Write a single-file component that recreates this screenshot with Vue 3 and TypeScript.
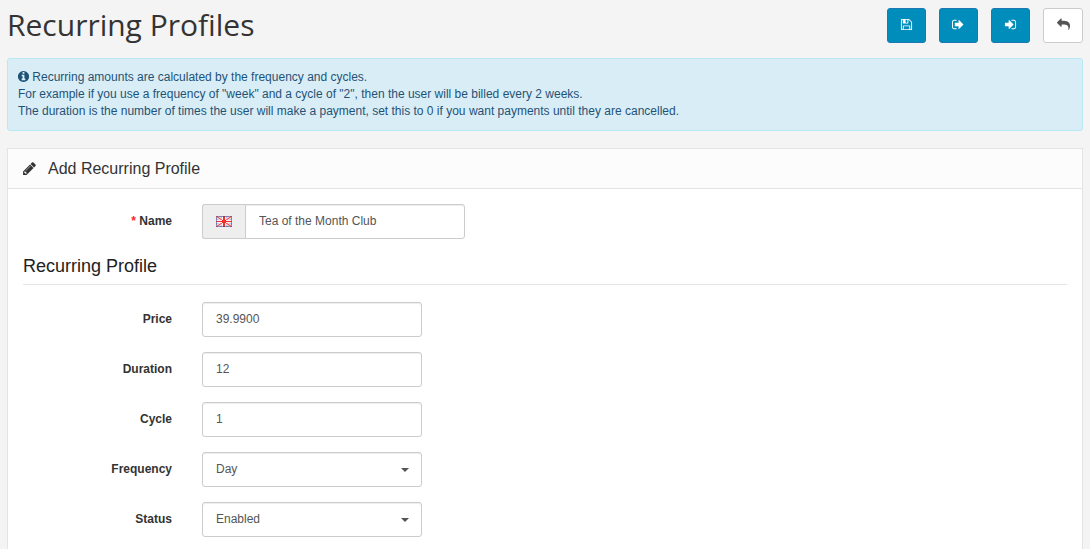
<script setup lang="ts">
import { ref } from 'vue'

interface Action {
  label: string
  path: string
  plain?: boolean
}

interface Field {
  id: string
  label: string
  value: string
  options?: string[]
}

const actions: Action[] = [
  {
    label: 'Save',
    path: 'M512 1536h768v-384h-768v384zm896 0h128v-896q0-14-10-38.5t-20-34.5l-281-281q-10-10-34-20t-39-10v416q0 40-28 68t-68 28h-576q-40 0-68-28t-28-68v-416h-128v1280h128v-416q0-40 28-68t68-28h832q40 0 68 28t28 68v416zm-384-928v-320q0-13-9.5-22.5t-22.5-9.5h-192q-13 0-22.5 9.5t-9.5 22.5v320q0 13 9.5 22.5t22.5 9.5h192q13 0 22.5-9.5t9.5-22.5zm640 32v928q0 40-28 68t-68 28h-1344q-40 0-68-28t-28-68v-1344q0-40 28-68t68-28h928q40 0 88 20t76 48l280 280q28 28 48 76t20 88z',
  },
  {
    label: 'Save and exit',
    path: 'M640 1440q0 4 1 20t.5 26.5-3 23.5-10 19.5-20.5 6.5h-320q-119 0-203.5-84.5t-84.5-203.5v-704q0-119 84.5-203.5t203.5-84.5h320q13 0 22.5 9.5t9.5 22.5q0 4 1 20t.5 26.5-3 23.5-10 19.5-20.5 6.5h-320q-66 0-113 47t-47 113v704q0 66 47 113t113 47h312l11.5 1 11.5 3 8 5.5 7 9 2 13.5zm928-544q0 26-19 45l-544 544q-19 19-45 19t-45-19-19-45v-288h-448q-26 0-45-19t-19-45v-384q0-26 19-45t45-19h448v-288q0-26 19-45t45-19 45 19l544 544q19 19 19 45z',
  },
  {
    label: 'Save and continue',
    path: 'M1312 896q0 26-19 45l-544 544q-19 19-45 19t-45-19-19-45v-288h-448q-26 0-45-19t-19-45v-384q0-26 19-45t45-19h448v-288q0-26 19-45t45-19 45 19l544 544q19 19 19 45zm352-352v704q0 119-84.5 203.5t-203.5 84.5h-320q-13 0-22.5-9.5t-9.5-22.5q0-4-1-20t-.5-26.5 3-23.5 10-19.5 20.5-6.5h320q66 0 113-47t47-113v-704q0-66-47-113t-113-47h-312l-11.5-1-11.5-3-8-5.5-7-9-2-13.5q0-4-1-20t-.5-26.5 3-23.5 10-19.5 20.5-6.5h320q119 0 203.5 84.5t84.5 203.5z',
  },
  {
    label: 'Cancel',
    plain: true,
    path: 'M0 640q0 26 19 45l512 512q19 19 45 19t45-19 19-45v-256h224q98 0 175.5 6t154 21.5 133 42.5 105.5 69.5 80 101 48.5 138.5 17.5 181q0 55-5 123 0 6-2.5 23.5t-2.5 26.5q0 15 8.5 25t23.5 10q16 0 28-17 7-9 13-22t13.5-30 10.5-24q127-285 127-451 0-199-53-333-162-403-875-403h-224v-256q0-26-19-45t-45-19-45 19l-512 512q-19 19-19 45z',
  },
]

const name = ref('Tea of the Month Club')

const fields = ref<Field[]>([
  { id: 'price', label: 'Price', value: '39.9900' },
  { id: 'duration', label: 'Duration', value: '12' },
  { id: 'cycle', label: 'Cycle', value: '1' },
  { id: 'frequency', label: 'Frequency', value: 'Day', options: ['Day', 'Week', 'Semi Month', 'Month', 'Year'] },
  { id: 'status', label: 'Status', value: 'Enabled', options: ['Enabled', 'Disabled'] },
])
</script>

<template>
  <main class="page">
    <header class="page-header">
      <h1>Recurring Profiles</h1>
      <div class="actions">
        <button
          v-for="a in actions"
          :key="a.label"
          type="button"
          class="btn"
          :class="{ plain: a.plain }"
          :aria-label="a.label"
        >
          <svg class="icon" viewBox="0 0 1792 1792" aria-hidden="true"><path :d="a.path" /></svg>
        </button>
      </div>
    </header>

    <div class="notice">
      <svg class="icon" viewBox="0 0 1792 1792" aria-hidden="true">
        <path d="M1152 1376v-160q0-14-9-23t-23-9h-96v-512q0-14-9-23t-23-9h-320q-14 0-23 9t-9 23v160q0 14 9 23t23 9h96v320h-96q-14 0-23 9t-9 23v160q0 14 9 23t23 9h448q14 0 23-9t9-23zm-128-896v-160q0-14-9-23t-23-9h-192q-14 0-23 9t-9 23v160q0 14 9 23t23 9h192q14 0 23-9t9-23zm640 416q0 209-103 385.5t-279.5 279.5-385.5 103-385.5-103-279.5-279.5-103-385.5 103-385.5 279.5-279.5 385.5-103 385.5 103 279.5 279.5 103 385.5z" />
      </svg>
      Recurring amounts are calculated by the frequency and cycles.<br />
      For example if you use a frequency of "week" and a cycle of "2", then the user will be billed every 2 weeks.<br />
      The duration is the number of times the user will make a payment, set this to 0 if you want payments until they are cancelled.
    </div>

    <section class="panel">
      <div class="panel-heading">
        <svg class="pencil" viewBox="0 0 1792 1792" aria-hidden="true">
          <path d="M491 1536l91-91-235-235-91 91v107h128v128h107zm523-928q0-22-22-22-10 0-17 7l-542 542q-7 7-7 17 0 22 22 22 10 0 17-7l542-542q7-7 7-17zm-54-192l416 416-832 832h-416v-416zm683 96q0 53-37 90l-166 166-416-416 166-165q36-38 90-38 53 0 91 38l235 234q37 39 37 91z" />
        </svg>
        <h2>Add Recurring Profile</h2>
      </div>

      <form class="form" @submit.prevent>
        <div class="row">
          <label for="name"><span class="required">*</span> Name</label>
          <div class="cell">
            <span class="addon">
              <svg class="flag" viewBox="0 0 16 11" role="img" aria-label="English">
                <path fill="#a9b9ee" d="M0 0h16v11H0z" />
                <path stroke="#fdf3f5" stroke-width="3" d="M0 0l16 11M16 0L0 11" />
                <path stroke="#ee5552" stroke-width="1.3" d="M0 0l16 11M16 0L0 11" />
                <path fill="#fdeff0" d="M6 0h4v11H6zM0 4h16v3H0z" />
                <path fill="#f0302c" d="M7 0h2v11H7zM0 5h16v1H0zM6 4h4v3H6z" />
                <path fill="none" stroke="#3a3d7c" stroke-opacity=".5" d="M.5 .5h15v10H.5z" />
              </svg>
            </span>
            <input id="name" v-model="name" class="control joined" type="text" />
          </div>
        </div>

        <fieldset>
          <legend>Recurring Profile</legend>
          <div v-for="f in fields" :key="f.id" class="row">
            <label :for="f.id">{{ f.label }}</label>
            <div class="cell">
              <div v-if="f.options" class="select">
                <select :id="f.id" v-model="f.value" class="control">
                  <option v-for="o in f.options" :key="o">{{ o }}</option>
                </select>
                <svg class="caret" viewBox="0 0 8 4" aria-hidden="true"><path d="M0 0h8L4 4z" /></svg>
              </div>
              <input v-else :id="f.id" v-model="f.value" class="control" type="text" />
            </div>
          </div>
        </fieldset>
      </form>
    </section>
  </main>
</template>

<style>
body {
  margin: 0;
  background: #f4f4f4;
}
</style>

<style scoped>
* {
  box-sizing: border-box;
}

.page {
  display: flex;
  flex-direction: column;
  min-height: 100vh;
  padding: 0 7px;
  font: 12px/17px "Liberation Sans", Arial, sans-serif;
  color: #333;
}

.page-header {
  display: flex;
  justify-content: space-between;
  align-items: flex-start;
  padding-top: 8px;
  margin-bottom: 15px;
}

h1 {
  margin: 0;
  font: 400 30px/33px "Open Sans", sans-serif;
  color: #333;
}

.actions {
  display: flex;
  gap: 13px;
}

.btn {
  display: flex;
  align-items: center;
  justify-content: center;
  width: 39px;
  height: 35px;
  padding: 0 0 2px;
  border: 1px solid #1979b0;
  border-radius: 3px;
  background: #008dbc;
  color: #fff;
}

.btn.plain {
  width: 40px;
  border-color: #ccc;
  background: #fff;
  color: #555;
}

.icon {
  width: 13px;
  height: 13px;
  fill: currentColor;
}

.notice {
  padding: 10px;
  margin-bottom: 17px;
  border: 1px solid #b8e8f4;
  border-radius: 3px;
  background: #d9edf7;
  color: #1f5376;
}

.notice .icon {
  margin-left: -1px;
  margin-right: -1px;
  vertical-align: -2px;
}

.panel {
  flex: 1;
  border: 1px solid #e4e4e4;
  border-bottom: 0;
  background: #fff;
}

.panel-heading {
  display: flex;
  align-items: center;
  gap: 11px;
  height: 40px;
  padding: 0 14px;
  border-bottom: 1px solid #e4e4e4;
  background: #fcfcfc;
}

.pencil {
  width: 15px;
  height: 15px;
  fill: #333;
}

h2 {
  margin: 0;
  font-size: 16px;
  font-weight: 400;
  line-height: 20px;
}

.form {
  padding: 15px 15px 0;
}

.row {
  display: grid;
  grid-template-columns: 2fr 10fr;
  align-items: center;
  margin: 0 -15px 15px;
}

label {
  padding-right: 15px;
  font-weight: 700;
  text-align: right;
}

.required {
  color: #f22;
}

.cell {
  display: flex;
  padding-left: 15px;
}

.addon {
  display: flex;
  align-items: center;
  width: 43px;
  padding: 0 13px;
  border: 1px solid #ccc;
  border-right: 0;
  border-radius: 3px 0 0 3px;
  background: #eee;
}

.flag {
  width: 16px;
  height: 11px;
}

.control {
  display: block;
  width: 220px;
  height: 35px;
  margin: 0;
  padding: 0 13px 2px;
  border: 1px solid #ccc;
  border-radius: 3px;
  background: #fff;
  box-shadow: inset 0 1px 1px rgba(0, 0, 0, 0.07);
  color: #555;
  font: inherit;
  appearance: none;
}

select.control {
  padding-bottom: 0;
}

.control.joined {
  border-radius: 0 3px 3px 0;
}

.select {
  position: relative;
}

.caret {
  position: absolute;
  top: 16px;
  right: 13px;
  width: 8px;
  height: 4px;
  fill: #555;
  pointer-events: none;
}

fieldset {
  min-width: 0;
  margin: 0;
  padding: 0;
  border: 0;
}

legend {
  width: 100%;
  padding: 0 0 6px;
  margin-bottom: 17px;
  border-bottom: 1px solid #e5e5e5;
  color: #222;
  font-size: 18px;
  line-height: 24px;
}

fieldset .row:last-child {
  margin-bottom: 12px;
}
</style>
